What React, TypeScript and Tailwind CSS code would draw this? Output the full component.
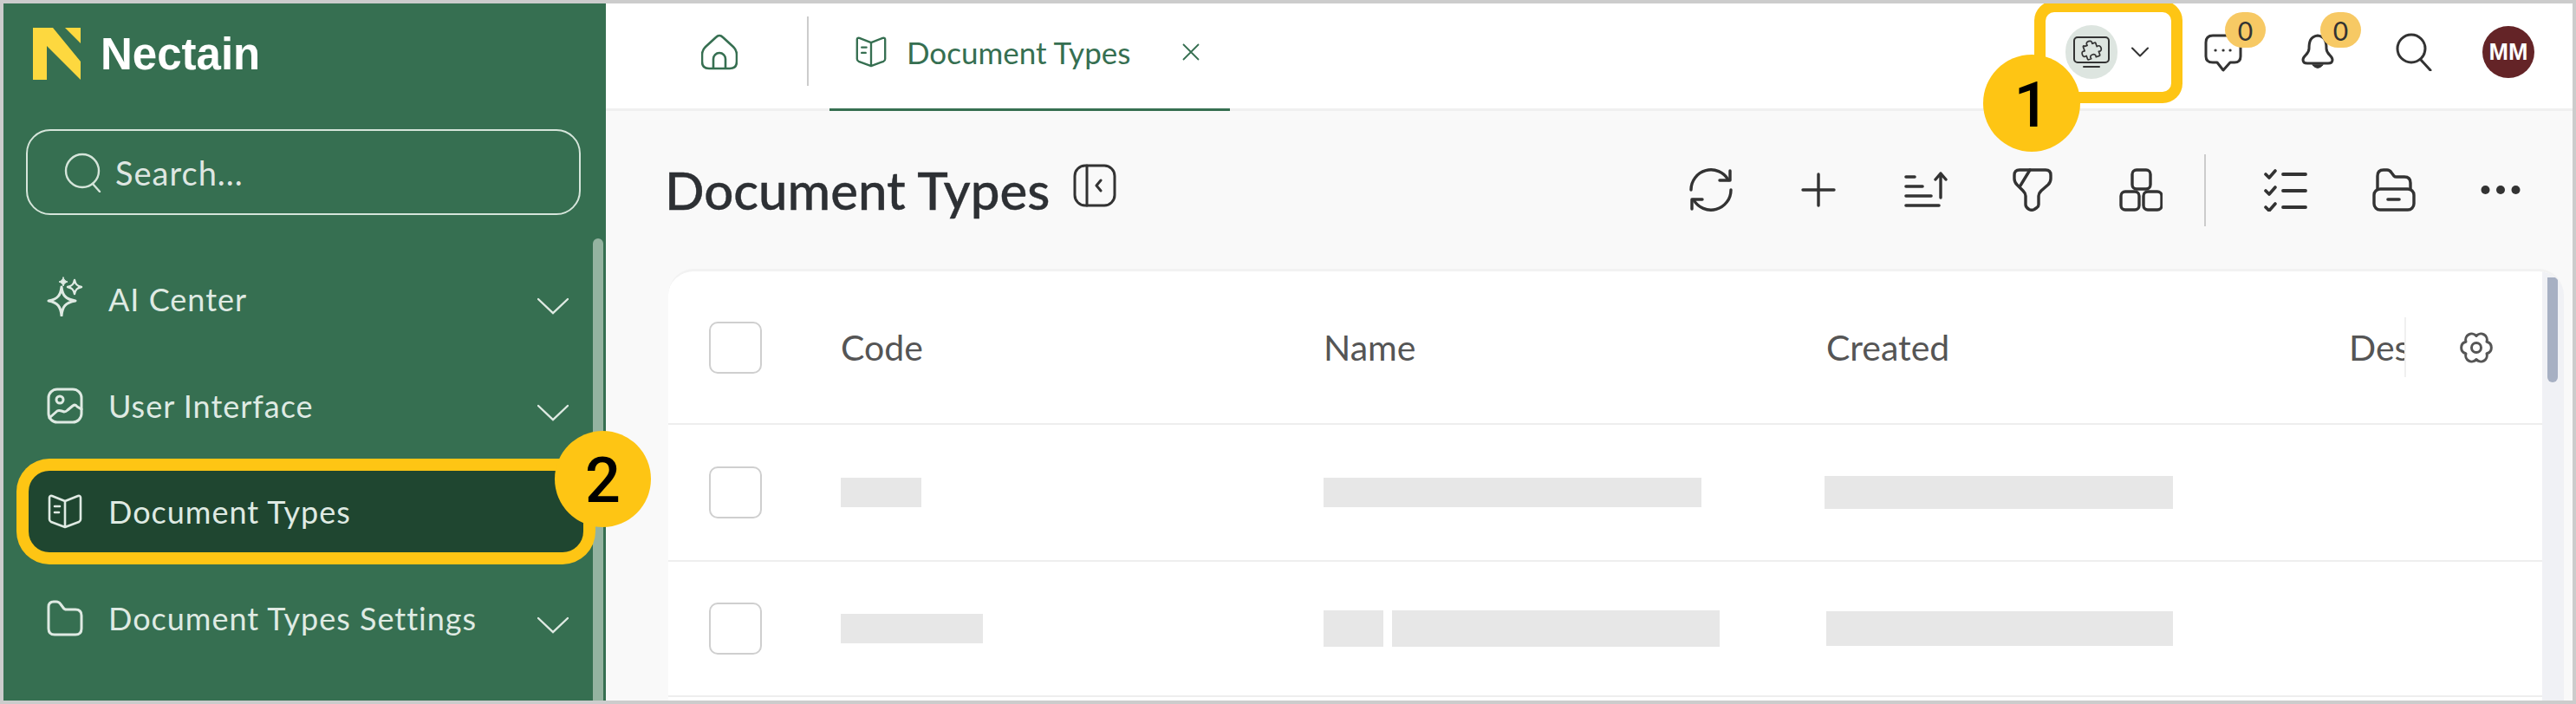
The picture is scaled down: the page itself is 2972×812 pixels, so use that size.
import React from 'react';
import { ChevronDown } from 'lucide-react';

const lato = "font-['Lato',sans-serif]";

const Svg = ({ w, h, className, children }: { w: number; h: number; className?: string; children: React.ReactNode }) => (
    <svg width={w} height={h} viewBox={`0 0 ${w} ${h}`} fill="none" stroke="currentColor" strokeWidth="3.4" strokeLinecap="round" strokeLinejoin="round" className={className}>
        {children}
    </svg>
);

const BookIcon = ({ w = 40, className }: { w?: number; className?: string }) => (
    <svg width={w} height={w} viewBox="0 0 40 40" fill="none" stroke="currentColor" strokeWidth="2.6" strokeLinecap="round" strokeLinejoin="round" className={className}>
        <path d="M20 8 L5 2 Q2 1.5 2 4 V29 Q2 31 4 32 L20 38 L36 32 Q38 31 38 29 V4 Q38 1.5 35 2 L20 8 V38" />
        <path d="M8 14 h6 M8 21 h5" />
    </svg>
);

const Chevron = () => (
    <svg width="36" height="20" viewBox="0 0 36 20" fill="none" stroke="#dfeae3" strokeWidth="2.4" strokeLinecap="round" className="ml-auto mt-[16px]">
        <path d="M1 2 L18 18 L35 2" />
    </svg>
);

const SparkleIcon = () => (
    <Svg w={42} h={46} className="-mt-[6px]">
        <path d="M17 12 C18 21 21 26 33 28 C21 30 18 35 17 45 C16 35 13 30 2 28 C13 26 16 21 17 12 Z" strokeWidth="3" />
        <path d="M32 4 C33 9 35 11 40 12 C35 13 33 15 32 20 C31 15 29 13 24 12 C29 11 31 9 32 4 Z" strokeWidth="2.4" />
        <path d="M19 1 C20 4 21 5 24 6 C21 7 20 8 19 11 C18 8 17 7 14 6 C17 5 18 4 19 1 Z" fill="currentColor" strokeWidth="1" />
    </Svg>
);

const ImageIcon = () => (
    <Svg w={42} h={42}>
        <rect x="2" y="2" width="38" height="38" rx="10" strokeWidth="3" />
        <circle cx="15" cy="14" r="4" strokeWidth="3" />
        <path d="M3 35 L12 27 Q14 26 17 27 L20 28 Q22 28 24 26 L30 21 Q33 19 35 22 L40 25" strokeWidth="3" />
    </Svg>
);

const FolderIcon = () => (
    <Svg w={42} h={42}>
        <path d="M2 8 Q2 2 8 2 H11 Q14 2 16 5 L19 9 Q20 11 23 11 H33 Q40 11 40 18 V33 Q40 40 33 40 H9 Q2 40 2 33 Z" strokeWidth="3" />
    </Svg>
);

const GearIcon = () => (
    <Svg w={38} h={36} className="ml-[62px]">
        <path d="M19 4.5 A7 7 0 0 1 31 11.2 A7 7 0 0 1 31 24.8 A7 7 0 0 1 19 31.5 A7 7 0 0 1 7 24.8 A7 7 0 0 1 7 11.2 A7 7 0 0 1 19 4.5 Z" strokeWidth="3" />
        <circle cx="19" cy="18" r="5.5" strokeWidth="3" />
    </Svg>
);

const navItems = [
    { label: 'AI Center', icon: <SparkleIcon />, mt: 'mt-[50px]', arrow: true },
    { label: 'User Interface', icon: <ImageIcon />, mt: 'mt-[29px]', arrow: true },
    { label: 'Document Types', icon: <BookIcon />, mt: 'mt-[28px]', arrow: false, active: true },
    { label: 'Document Types Settings', icon: <FolderIcon />, mt: 'mt-[29px]', arrow: true },
];

const Sidebar = () => (
    <div className="relative w-[695px] shrink-0 h-full bg-[#366f51] text-[#dfeae3]">
        {/* scrollbar */}
        <div className="absolute left-[680px] top-[271px] bottom-0 w-[12px] rounded-t-full bg-[#94b3a0]" />

        <div className="flex items-center pl-[34px] pt-[28px]">
            <svg width="56" height="60" viewBox="0 0 56 60" fill="#fdd83f">
                <polygon points="0,0 23,0 55,39 55,60 16,21 16,60 0,60" />
                <polygon points="37,0 55,0 55,18" />
            </svg>
            <span className="ml-[22px] font-['Liberation_Sans',sans-serif] font-bold text-[51px] leading-none text-white">Nectain</span>
        </div>

        <div className={`mt-[57px] ml-[26px] w-[640px] h-[99px] rounded-[28px] border-2 border-[#d5e5da] flex items-center pl-[42px] ${lato}`}>
            <svg width="44" height="46" viewBox="0 0 44 46" fill="none" stroke="#d5e5da" strokeWidth="2.4" strokeLinecap="round">
                <circle cx="21" cy="21" r="19" />
                <path d="M33 36 L41 45" />
            </svg>
            <span className="ml-[15px] text-[38px] leading-none tracking-[1px] text-[#dfe6e2]">Search...</span>
        </div>

        <div className={lato}>
            {navItems.map((item) => (
                <div
                    key={item.label}
                    className={`${item.mt} relative ml-[29px] w-[640px] h-[94px] pl-[21px] pr-[17px] flex items-center ${item.active ? 'z-10 bg-[#1f4630] rounded-[24px] ring-[14px] ring-[#fec514]' : ''}`}
                >
                    <span className="w-[42px] flex justify-center shrink-0">{item.icon}</span>
                    <span className="ml-[29px] text-[36px] leading-none tracking-[1px]">{item.label}</span>
                    {item.arrow && <Chevron />}
                    {item.active && (
                        <span className="absolute -top-[46px] left-[607px] w-[111px] h-[111px] pt-[5px] rounded-full bg-[#fec514] flex items-center justify-center font-['Roboto',sans-serif] font-medium text-[72px] leading-none text-black">2</span>
                    )}
                </div>
            ))}
        </div>
    </div>
);

const Badge = ({ className }: { className: string }) => (
    <span className={`absolute w-[47px] h-[41px] rounded-full bg-[#f7c964] flex items-center justify-center text-[30px] leading-none text-[#333] ${className}`}>0</span>
);

const Header = () => (
    <div className={`h-[124px] shrink-0 bg-white border-b-[3px] border-[#f0f0f0] flex items-stretch ${lato}`}>
        <div className="ml-[110px] pb-[9px] flex items-center">
            <svg width="42" height="42" viewBox="0 0 42 42" fill="none" stroke="#366f51" strokeWidth="2.6" strokeLinejoin="round">
                <path d="M21 2 Q23 2 25 4 L37 15 Q41 19 41 24 V32 Q41 40 33 40 H9 Q1 40 1 32 V24 Q1 19 5 15 L17 4 Q19 2 21 2 Z" />
                <path d="M14 40 V29 A7 7 0 0 1 28 29 V40" />
            </svg>
        </div>
        <div className="ml-[80px] mt-[15px] h-[80px] w-[2px] bg-[#ccc]" />
        <div className="ml-[24px] w-[462px] h-[124px] pb-[9px] border-b-[3px] border-[#366f51] flex items-center pl-[30px] text-[#366f51]">
            <BookIcon w={36} />
            <span className="ml-[23px] text-[35px] leading-none">Document Types</span>
            <svg width="20" height="20" viewBox="0 0 20 20" stroke="#366f51" strokeWidth="1.8" className="ml-[60px]">
                <path d="M1 1 L19 19 M19 1 L1 19" />
            </svg>
        </div>

        <div className="ml-auto flex items-center pr-[44px] pb-[9px] text-[#333]">
            <div className="relative w-[145px] h-[92px] rounded-[10px] ring-[13px] ring-[#fec514] flex items-center pl-[23px]">
                <span className="w-[60px] h-[62px] rounded-full bg-[#dde5e0] flex items-center justify-center">
                    <svg width="60" height="62" viewBox="0 0 60 62" fill="none" stroke="#333" strokeWidth="2" strokeLinejoin="round" strokeLinecap="round">
                        <rect x="10" y="14" width="40" height="29" rx="4" />
                        <path d="M21 48 H39" />
                        <path transform="rotate(-20 30 28)" d="M24 22 h3 c-1 -3 1 -4 3 -4 s4 1 3 4 h3 q1 0 1 1 v4 c3 -1 4 1 4 3 s-1 4 -4 3 v4 q0 1 -1 1 h-4 c1 -3 -1 -4 -3 -4 s-4 1 -3 4 h-3 q-1 0 -1 -1 v-4 c-3 1 -4 -1 -4 -3 s1 -4 4 -3 v-5 q0 -1 1 -1 z" strokeWidth="1.7" />
                    </svg>
                </span>
                <ChevronDown size={36} strokeWidth={1.4} className="ml-[8px]" />
                <span className="absolute -left-[72px] top-[49px] w-[112px] h-[112px] pt-[5px] rounded-full bg-[#fec514] flex items-center justify-center font-['Roboto',sans-serif] font-medium text-[72px] leading-none text-black">1</span>
            </div>

            <div className="relative ml-[38px] w-[42px] h-[42px]">
                <Svg w={44} h={44}>
                    <path d="M10 2 H33 Q42 2 42 11 V26 Q42 33 35 33 H30 L22 42 L15 33 H10 Q2 33 2 26 V10 Q2 2 10 2 Z" strokeWidth="3" />
                    <path d="M13 19 h.1 M22 19 h.1 M30 19 h.1" strokeWidth="3.2" />
                </Svg>
                <Badge className="left-[24px] -top-[25px]" />
            </div>

            <div className="relative ml-[70px] w-[38px] h-[42px]">
                <Svg w={38} h={42}>
                    <path d="M19 2 C10 3 9 10 9 17 C9 24 2 25 2 30 C2 33 4 34 7 34 H31 C34 34 36 33 36 30 C36 25 29 24 29 17 C29 10 28 3 19 2 Z" strokeWidth="3" />
                    <path d="M13 36 Q19 43 25 36 Z" fill="currentColor" strokeWidth="1" />
                </Svg>
                <Badge className="left-[22px] -top-[25px]" />
            </div>

            <svg width="42" height="44" viewBox="0 0 42 44" fill="none" stroke="#333" strokeWidth="3" strokeLinecap="round" className="ml-[71px]">
                <circle cx="18" cy="18" r="16" />
                <path d="M29 31 L40 43" />
            </svg>

            <span className="ml-[58px] w-[60px] h-[60px] rounded-full bg-[#642427] flex items-center justify-center font-['Liberation_Sans',sans-serif] font-bold text-[27px] leading-none text-white">MM</span>
        </div>
    </div>
);

const Toolbar = () => (
    <div className={`h-[182px] shrink-0 flex items-center pl-[68px] pr-[60px] text-[#333] ${lato}`}>
        <h1 className="text-[60px] leading-none font-medium text-[#2d3034] [-webkit-text-stroke:0.4px_#2d3034]">Document Types</h1>
        <svg width="50" height="50" viewBox="0 0 50 50" fill="none" stroke="#333" strokeWidth="3" strokeLinecap="round" strokeLinejoin="round" className="ml-[27px] -mt-[10px]">
            <rect x="2" y="2" width="46" height="46" rx="12" />
            <path d="M16 2 V48" />
            <path d="M32 19 L27 25 L32 31" />
        </svg>

        <div className="ml-auto flex items-center">
            <Svg w={50} h={50}>
                <path d="M2 25 A23 23 0 0 1 45 13.5" />
                <path d="M47 3 V14 H35" />
                <path d="M48 25 A23 23 0 0 1 5 36.5" />
                <path d="M3 47 V36 H15" />
            </Svg>
            <Svg w={40} h={40} className="ml-[79px]">
                <path d="M20 2 V38 M2 20 H38" />
            </Svg>
            <Svg w={50} h={42} className="ml-[79px]">
                <path d="M2 6 H12 M2 17 H21 M2 28 H31 M2 39 H40" strokeWidth="3.6" />
                <path d="M42 30 V2 M36 9 L42 2 L48 9" />
            </Svg>
            <Svg w={46} h={50} className="ml-[75px]">
                <path d="M8 2 H38 Q44 2 44 8 V12 Q44 16 41 19 L33 26 Q30 29 30 32 V42 Q30 44 28 45.5 L25 47.5 Q22 49 19 47.5 Q15 45 15 42 V32 Q15 29 12 26 L5 19 Q2 16 2 12 V8 Q2 2 8 2 Z" />
                <path d="M20 2 L9 20" />
            </Svg>
            <Svg w={50} h={50} className="ml-[77px]">
                <rect x="15" y="2" width="21" height="22" rx="5" />
                <rect x="2" y="27" width="21" height="21" rx="5" />
                <rect x="28" y="27" width="21" height="21" rx="5" />
            </Svg>
            <div className="ml-[48px] w-[2px] h-[83px] bg-[#ccc]" />
            <Svg w={50} h={50} className="ml-[67px]">
                <path d="M22 7 H48 M22 26 H48 M22 45 H48" strokeWidth="3.8" />
                <path d="M2 7 L6 11 L13 3 M2 26 L6 30 L13 22 M2 45 L6 49 L13 41" strokeWidth="3.6" />
            </Svg>
            <Svg w={50} h={50} className="ml-[75px]">
                <path d="M6 24 V9 Q6 2 13 2 H17 Q20 2 22 5 L25 9 Q26 10 28 10 H37 Q44 10 44 17 V24" />
                <rect x="2" y="24" width="46" height="24" rx="7" />
                <path d="M18 36 H31" strokeWidth="3.6" />
            </Svg>
            <svg width="46" height="12" viewBox="0 0 46 12" fill="#333" className="ml-[75px]">
                <circle cx="5.5" cy="6" r="5" />
                <circle cx="23" cy="6" r="5" />
                <circle cx="40.5" cy="6" r="5" />
            </svg>
        </div>
    </div>
);

const Checkbox = () => (
    <div className="w-[61px] h-[60px] shrink-0 rounded-[10px] border-2 border-[#cfcfcf] bg-white" />
);

const Skeleton = ({ className }: { className: string }) => <div className={`bg-[#e7e7e7] ${className}`} />;

const Table = () => (
    <div className={`ml-[72px] mr-[10px] flex-1 min-h-0 flex rounded-t-[30px] overflow-hidden border-t-[3px] border-[#f2f2f2] bg-white ${lato}`}>
        <div className="flex-1 min-w-0 flex flex-col">
            <div className="h-[177px] shrink-0 flex items-center pl-[47px] border-b-2 border-[#eeeeee] text-[41px] leading-none text-[#555]">
                <Checkbox />
                <span className="ml-[91px] w-[557px]">Code</span>
                <span className="w-[580px]">Name</span>
                <span className="w-[603px]">Created</span>
                <span className="w-[64px] overflow-hidden">Description</span>
                <div className="h-[69px] w-[2px] bg-[#f0f0f0] shrink-0" />
                <GearIcon />
            </div>
            <div className="h-[158px] shrink-0 flex items-center pl-[47px] border-b-2 border-[#eeeeee]">
                <Checkbox />
                <div className="ml-[91px] w-[557px]"><Skeleton className="w-[93px] h-[34px]" /></div>
                <div className="w-[580px]"><Skeleton className="w-[436px] h-[34px]" /></div>
                <Skeleton className="-ml-[2px] w-[402px] h-[38px]" />
            </div>
            <div className="h-[156px] shrink-0 flex items-center pl-[47px] border-b-2 border-[#eeeeee]">
                <Checkbox />
                <div className="ml-[91px] w-[557px]"><Skeleton className="w-[164px] h-[34px]" /></div>
                <div className="w-[580px] flex gap-[10px]">
                    <Skeleton className="w-[69px] h-[42px]" />
                    <Skeleton className="w-[378px] h-[42px]" />
                </div>
                <Skeleton className="w-[400px] h-[40px]" />
            </div>
        </div>
        {/* scrollbar */}
        <div className="w-[25px] shrink-0 bg-[#f0f1f5] pl-[6px] pr-[7px] pt-[7px]">
            <div className="h-[121px] rounded-b-full bg-[#a7b0c3]" />
        </div>
    </div>
);

const App = () => {
    return (
        <div className="w-[2972px] h-[812px] border-4 border-[#cccccc] flex overflow-hidden">
            <Sidebar />
            <div className="flex-1 min-w-0 h-full flex flex-col bg-[#f9f9f9]">
                <Header />
                <Toolbar />
                <Table />
            </div>
        </div>
    );
};

export default App;
